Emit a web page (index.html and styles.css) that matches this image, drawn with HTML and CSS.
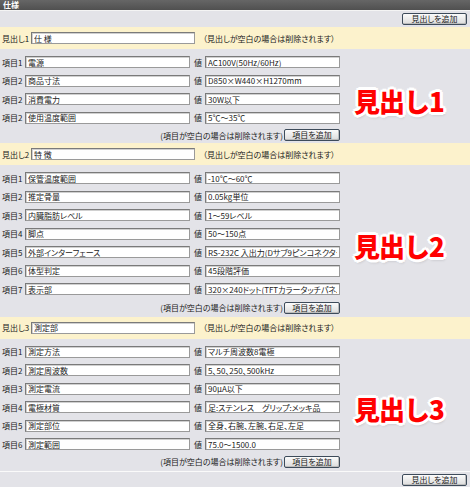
FILE: index.html
```html
<!DOCTYPE html>
<html lang="ja">
<head>
<meta charset="utf-8">
<title>仕様</title>
<link rel="stylesheet" href="styles.css">
</head>
<body>
<div class="page">
  <div class="titlebar">仕様</div>
  <div class="toolbar"><button class="btn btn-head">見出しを追加</button></div>

  <section class="sec">
    <div class="head-row"><span class="hlabel">見出し1</span><input class="inp hinput" value="仕 様"><span class="hnote">（見出しが空白の場合は削除されます）</span></div>
    <div class="body">
      <div class="rows">
        <div class="item"><span class="ilabel">項目1</span><input class="inp iname" value="電源"><span class="vlabel">値</span><input class="inp ivalue" value="AC100V(50Hz/60Hz)"></div>
        <div class="item"><span class="ilabel">項目2</span><input class="inp iname" value="商品寸法"><span class="vlabel">値</span><input class="inp ivalue" value="D850×W440×H1270mm"></div>
        <div class="item"><span class="ilabel">項目2</span><input class="inp iname" value="消費電力"><span class="vlabel">値</span><input class="inp ivalue" value="30W以下"></div>
        <div class="item"><span class="ilabel">項目2</span><input class="inp iname" value="使用温度範囲"><span class="vlabel">値</span><input class="inp ivalue" value="5℃～35℃"></div>
        <div class="note-row"><span class="inote">(項目が空白の場合は削除されます)</span><button class="btn btn-item">項目を追加</button></div>
      </div>
      <div class="big"><span class="bigtext">見出し1</span></div>
    </div>
  </section>

  <section class="sec">
    <div class="head-row"><span class="hlabel">見出し2</span><input class="inp hinput" value="特 徴"><span class="hnote">（見出しが空白の場合は削除されます）</span></div>
    <div class="body">
      <div class="rows">
        <div class="item"><span class="ilabel">項目1</span><input class="inp iname" value="保管温度範囲"><span class="vlabel">値</span><input class="inp ivalue" value="-10℃～60℃"></div>
        <div class="item"><span class="ilabel">項目2</span><input class="inp iname" value="推定骨量"><span class="vlabel">値</span><input class="inp ivalue" value="0.05kg単位"></div>
        <div class="item"><span class="ilabel">項目3</span><input class="inp iname" value="内臓脂肪レベル"><span class="vlabel">値</span><input class="inp ivalue" value="1～59レベル"></div>
        <div class="item"><span class="ilabel">項目4</span><input class="inp iname" value="脚点"><span class="vlabel">値</span><input class="inp ivalue" value="50～150点"></div>
        <div class="item"><span class="ilabel">項目5</span><input class="inp iname" value="外部インターフェース"><span class="vlabel">値</span><input class="inp ivalue" value="RS-232C 入出力(Dサブ9ピンコネクター)"></div>
        <div class="item"><span class="ilabel">項目6</span><input class="inp iname" value="体型判定"><span class="vlabel">値</span><input class="inp ivalue" value="45段階評価"></div>
        <div class="item"><span class="ilabel">項目7</span><input class="inp iname" value="表示部"><span class="vlabel">値</span><input class="inp ivalue" value="320×240ドット(TFTカラータッチパネル)"></div>
        <div class="note-row"><span class="inote">(項目が空白の場合は削除されます)</span><button class="btn btn-item">項目を追加</button></div>
      </div>
      <div class="big"><span class="bigtext">見出し2</span></div>
    </div>
  </section>

  <section class="sec">
    <div class="head-row"><span class="hlabel">見出し3</span><input class="inp hinput" value="測定部"><span class="hnote">（見出しが空白の場合は削除されます）</span></div>
    <div class="body">
      <div class="rows">
        <div class="item"><span class="ilabel">項目1</span><input class="inp iname" value="測定方法"><span class="vlabel">値</span><input class="inp ivalue" value="マルチ周波数8電極"></div>
        <div class="item"><span class="ilabel">項目2</span><input class="inp iname" value="測定周波数"><span class="vlabel">値</span><input class="inp ivalue" value="5、50、250、500kHz"></div>
        <div class="item"><span class="ilabel">項目3</span><input class="inp iname" value="測定電流"><span class="vlabel">値</span><input class="inp ivalue" value="90μA以下"></div>
        <div class="item"><span class="ilabel">項目4</span><input class="inp iname" value="電極材質"><span class="vlabel">値</span><input class="inp ivalue" value="足:ステンレス　グリップ:メッキ品"></div>
        <div class="item"><span class="ilabel">項目5</span><input class="inp iname" value="測定部位"><span class="vlabel">値</span><input class="inp ivalue" value="全身、右腕、左腕、右足、左足"></div>
        <div class="item"><span class="ilabel">項目6</span><input class="inp iname" value="測定範囲"><span class="vlabel">値</span><input class="inp ivalue" value="75.0～1500.0"></div>
        <div class="note-row"><span class="inote">(項目が空白の場合は削除されます)</span><button class="btn btn-item">項目を追加</button></div>
      </div>
      <div class="big"><span class="bigtext">見出し3</span></div>
    </div>
  </section>

  <div class="footer"><button class="btn btn-head">見出しを追加</button></div>
</div>
</body>
</html>
```

FILE: styles.css
```css
html, body {
  margin: 0;
  padding: 0;
  background: #e3e3e8;
}
.page {
  width: 470px;
  font-family: "Noto Sans CJK JP", "DejaVu Sans", sans-serif;
  font-size: 8px;
  color: #222;
  font-feature-settings: "palt";
  white-space: nowrap;
}
.titlebar {
  height: 10px;
  line-height: 10px;
  background: linear-gradient(#666, #505050);
  color: #fff;
  font-weight: bold;
  padding-left: 3px;
  border-bottom: 1px solid #f4f4f4;
  font-size: 8px;
}
.toolbar {
  height: 16px;
  display: flex;
  justify-content: flex-end;
  align-items: center;
  padding-right: 3px;
}
.btn {
  flex-shrink: 0;
  font-family: "Noto Sans CJK JP", sans-serif;
  font-size: 8px;
  font-feature-settings: "palt";
  color: #222;
  height: 12px;
  padding: 0;
  line-height: 10px;
  border: 1px solid #3d4b5a;
  border-radius: 2px;
  background: linear-gradient(#fbfbfb, #dcdcdc);
  box-shadow: inset -1px -1px 0 #bcbcbc;
}
.btn-head { width: 65px; }
.btn-item { width: 56px; }

.head-row {
  height: 22px;
  background: #fcf2cc;
  display: flex;
  align-items: center;
  padding-left: 2px;
}
.hlabel { width: 29px; flex-shrink: 0; }
.inp {
  flex-shrink: 0;
  box-sizing: border-box;
  height: 12px;
  margin: 0;
  padding: 0 2px;
  border: 1px solid #7a7a7a;
  border-right-color: #9a9a9a;
  border-bottom-color: #9a9a9a;
  box-shadow: inset 1px 1px 0 #d0d0d0;
  background: #fff;
  font-family: "Noto Sans CJK JP", sans-serif;
  font-size: 8px;
  font-feature-settings: "palt";
  color: #222;
  line-height: 10px;
}
.hinput { width: 164px; }
.hnote { margin-left: 8px; }

.body {
  display: flex;
  padding-top: 4px;
}
.rows { width: 340px; flex-shrink: 0; }
.item {
  height: 18.5px;
  display: flex;
  align-items: center;
  padding-left: 2px;
}
.ilabel { width: 23px; flex-shrink: 0; }
.iname { width: 165px; }
.vlabel { width: 15px; padding-left: 4px; box-sizing: border-box; flex-shrink: 0; }
.ivalue { width: 135px; }
.note-row {
  height: 16px;
  display: flex;
  justify-content: flex-end;
  align-items: center;
  gap: 1px;
}
.sec:nth-of-type(2) .note-row { height: 18px; }

.big {
  flex: 1;
  display: flex;
  align-items: center;
  padding-left: 14px;
  padding-top: 6px;
}
.bigtext {
  font-family: "Noto Sans CJK JP", sans-serif;
  font-feature-settings: normal;
  font-size: 26px;
  font-weight: 900;
  color: #f00;
  line-height: 1;
  letter-spacing: -1px;
  -webkit-text-stroke: 1.2px #f00;
  paint-order: stroke fill;
  text-shadow:
    3px 0 0 #fff, -3px 0 0 #fff, 0 3px 0 #fff, 0 -3px 0 #fff,
    2px 2px 0 #fff, -2px 2px 0 #fff, 2px -2px 0 #fff, -2px -2px 0 #fff,
    1px 3px 3px rgba(0,0,0,0.18);
}

.footer {
  border-top: 1px solid #fafafa;
  margin-top: 1px;
  height: 16px;
  display: flex;
  justify-content: flex-end;
  align-items: center;
  padding-right: 3px;
}
```
